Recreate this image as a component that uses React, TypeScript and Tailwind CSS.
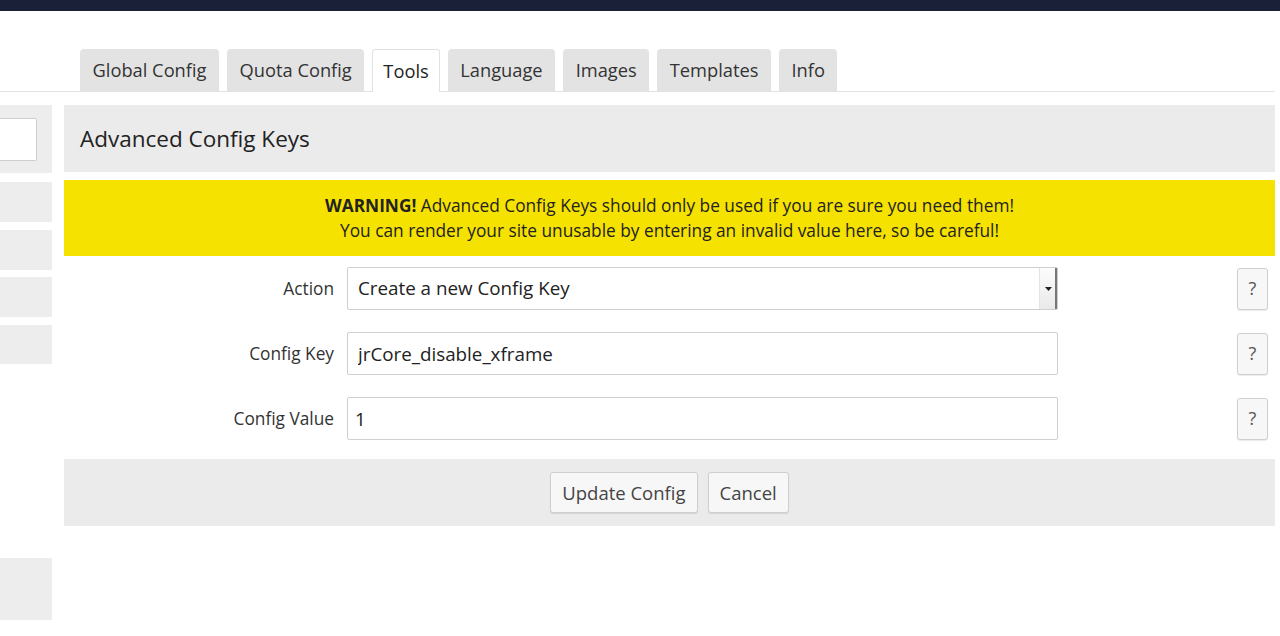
import { useState } from "react";

const tabs = ["Global Config", "Quota Config", "Tools", "Language", "Images", "Templates", "Info"];

function HelpButton() {
  return (
    <button className="flex h-[42px] w-[31px] items-center justify-center rounded-[3px] border border-[#cfcfcf] bg-[#f7f7f7] text-[18px] text-[#555] shadow-[0_1px_1px_rgba(0,0,0,0.08)]">
      ?
    </button>
  );
}

function FormRow({ label, children }: { label: string; children: React.ReactNode }) {
  return (
    <div className="flex h-[43px] items-center">
      <label className="w-[270px] text-right text-[17.3px] text-[#333]">{label}</label>
      <div className="ml-[13px] h-full w-[711px]">{children}</div>
      <div className="ml-auto mr-[7px]">
        <HelpButton />
      </div>
    </div>
  );
}

export default function App() {
  const [active] = useState("Tools");
  const [configKey, setConfigKey] = useState("jrCore_disable_xframe");
  const [configValue, setConfigValue] = useState("1");

  return (
    <div className="h-[636px] w-[1280px] overflow-hidden bg-white font-['Open_Sans','Noto_Sans',sans-serif] text-[#333]">
      {/* top bar */}
      <div className="h-[11px] bg-[#1b2039]" />

      {/* tabs */}
      <div className="mt-[39px] mr-[5px] flex h-[42px] items-end gap-[8px] border-b border-[#e2e2e2] pl-[80px]">
        {tabs.map((t) =>
          t === active ? (
            <div
              key={t}
              className="-mb-px flex h-[43px] items-center rounded-t-[3px] border border-b-0 border-[#e2e2e2] bg-white px-[10px] text-[18.3px] text-[#222]"
            >
              {t}
            </div>
          ) : (
            <div
              key={t}
              className="flex h-[42px] items-center rounded-t-[4px] bg-[#e3e3e3] px-[12.5px] text-[18.3px] text-[#333]"
            >
              {t}
            </div>
          )
        )}
      </div>

      <div className="mt-[13px] flex gap-[12px]">
        {/* left sidebar */}
        <div className="flex w-[52px] flex-col">
          <div className="flex h-[68px] items-center bg-[#ededed]">
            <div className="h-[43px] w-[37px] rounded-r-[2px] border border-l-0 border-[#cfcfcf] bg-white" />
          </div>
          <div className="mt-[9px] h-[40px] bg-[#ededed]" />
          <div className="mt-[8px] h-[40px] bg-[#ededed]" />
          <div className="mt-[7px] h-[40px] bg-[#ededed]" />
          <div className="mt-[8px] h-[39px] bg-[#ededed]" />
          <div className="mt-[194px] h-[62px] bg-[#ededed]" />
        </div>

        {/* main */}
        <div className="w-[1211px]">
          <div className="flex h-[67px] items-center bg-[#ebebeb] pl-[16px] text-[22.5px] text-[#222]">
            Advanced Config Keys
          </div>

          <div className="mt-[8px] flex h-[76px] flex-col items-center justify-center bg-[#f6e200] text-[17.3px] leading-[25px] text-[#222]">
            <p>
              <span className="font-bold">WARNING!</span> Advanced Config Keys should only be used if you are sure you need them!
            </p>
            <p>You can render your site unusable by entering an invalid value here, so be careful!</p>
          </div>

          <div className="mt-[11px] flex flex-col gap-[22px]">
            <FormRow label="Action">
              <div className="flex h-full w-full items-stretch rounded-[2px] border border-[#cfcfcf] bg-white">
                <div className="flex flex-1 items-center pl-[10px] text-[18.8px] text-[#222]">Create a new Config Key</div>
                <div className="flex w-[18px] items-center justify-center border-l border-[#e4e4e4] bg-gradient-to-b from-[#fdfdfd] to-[#e9e9e9] shadow-[inset_-2px_0_0_#777]">
                  <svg width="7" height="4" viewBox="0 0 7 4">
                    <path d="M0 0h7L3.5 4z" fill="#222" />
                  </svg>
                </div>
              </div>
            </FormRow>
            <FormRow label="Config Key">
              <input
                value={configKey}
                onChange={(e) => setConfigKey(e.target.value)}
                className="h-full w-full rounded-[2px] border border-[#cfcfcf] bg-white px-[10px] text-[18.8px] text-[#222] outline-none"
              />
            </FormRow>
            <FormRow label="Config Value">
              <input
                value={configValue}
                onChange={(e) => setConfigValue(e.target.value)}
                className="h-full w-full rounded-[2px] border border-[#cfcfcf] bg-white px-[7px] text-[18.8px] text-[#222] outline-none"
              />
            </FormRow>
          </div>

          <div className="mt-[19px] flex h-[67px] items-center justify-center gap-[10px] bg-[#ebebeb]">
            <button className="h-[41px] rounded-[3px] border border-[#cfcfcf] bg-[#f7f7f7] px-[11px] text-[18.5px] text-[#444] shadow-[0_1px_1px_rgba(0,0,0,0.1)]">
              Update Config
            </button>
            <button className="h-[41px] rounded-[3px] border border-[#cfcfcf] bg-[#f7f7f7] px-[11px] text-[18.5px] text-[#444] shadow-[0_1px_1px_rgba(0,0,0,0.1)]">
              Cancel
            </button>
          </div>
        </div>
      </div>
    </div>
  );
}
